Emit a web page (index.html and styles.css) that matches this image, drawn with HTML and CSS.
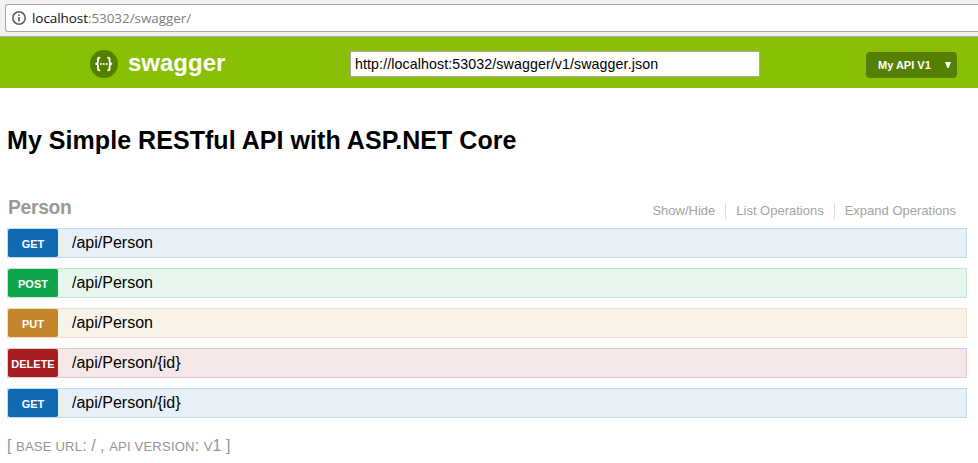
FILE: index.html
```html
<!DOCTYPE html>
<html lang="en">
<head>
<meta charset="utf-8">
<title>Swagger UI</title>
<link rel="stylesheet" href="styles.css">
</head>
<body>
<div class="browser">
  <div class="address">
    <svg class="info" viewBox="0 0 14 14"><circle cx="7" cy="7" r="6.2" fill="none" stroke="#5a5a5a" stroke-width="1.5"/><path d="M7 6v4.4M7 3.4v1.5" stroke="#5a5a5a" stroke-width="1.6"/></svg>
    <span class="url"><span class="host">localhost</span>:53032/swagger/</span>
  </div>
</div>
<header class="header">
  <a class="logo">
    <svg class="mark" viewBox="0 0 28 28"><circle cx="14" cy="14" r="14" fill="#547f00"/><g fill="none" stroke="#fff" stroke-width="1.8"><path d="M10.2 7.6H9.6Q8 7.6 8 9.2V11.8Q8 13.8 5.4 13.9Q8 14 8 16V18.8Q8 20.4 9.6 20.4H10.2"/><path d="M17.4 7.6H18Q19.6 7.6 19.6 9.2V11.8Q19.6 13.8 22.2 13.9Q19.6 14 19.6 16V18.8Q19.6 20.4 18 20.4H17.4"/></g><g fill="#fff"><circle cx="10.9" cy="14" r="1.05"/><circle cx="13.8" cy="14" r="1.05"/><circle cx="16.7" cy="14" r="1.05"/></g></svg>
    <span class="brand">swagger</span>
  </a>
  <div class="source"><span class="source-text">http://localhost:53032/swagger/v1/swagger.json</span></div>
  <div class="version"><span class="version-text">My API V1</span><svg class="arrow" viewBox="0 0 6 6"><path d="M0 0H6L3.6 6H2.4Z" fill="#fff"/></svg></div>
</header>
<main class="content">
  <h1 class="title">My Simple RESTful API with ASP.NET Core</h1>
  <div class="heading">
    <h2 class="resource">Person</h2>
    <ul class="options"><li>Show/Hide</li><li>List Operations</li><li>Expand Operations</li></ul>
  </div>
  <div class="operations">
    <div class="op get"><span class="method">GET</span><span class="path">/api/Person</span></div>
    <div class="op post"><span class="method">POST</span><span class="path">/api/Person</span></div>
    <div class="op put"><span class="method">PUT</span><span class="path">/api/Person</span></div>
    <div class="op delete"><span class="method">DELETE</span><span class="path">/api/Person/{id}</span></div>
    <div class="op get"><span class="method">GET</span><span class="path">/api/Person/{id}</span></div>
  </div>
  <footer class="footer">[ <span class="caps">BASE URL</span>: / , <span class="caps">API VERSION</span>: <span class="caps">V</span>1 ]</footer>
</main>
</body>
</html>
```
FILE: styles.css
```css
* { box-sizing: border-box; }
body { margin: 0; height: 463px; overflow: hidden; background: #fff; color: #000; font-family: "Liberation Sans", Arial, sans-serif; }
.browser { height: 37px; padding: 4px 0 0 5px; background: #f2f2f2; border-bottom: 1px solid #b0b0b0; }
.address { display: flex; align-items: center; height: 28px; padding-left: 6px; background: #fff; border: 1px solid #a9a9a9; border-right: 0; border-radius: 3px 0 0 3px; }
.info { width: 14px; height: 14px; margin-right: 6px; }
.url { font-family: "Open Sans", sans-serif; font-size: 13.5px; letter-spacing: -0.07px; color: #808080; white-space: nowrap; }
.host { color: #111; }
.header { display: flex; align-items: flex-start; height: 51px; padding-left: 90px; background: #89bf04; }
.logo { display: flex; align-items: center; width: 260px; height: 51px; padding-top: 3px; }
.mark { width: 28px; height: 28px; }
.brand { margin: -2px 0 0 10px; color: #fff; font-size: 24px; font-weight: bold; }
.source { display: flex; align-items: center; width: 410px; height: 26px; margin-top: 14px; padding-left: 4px; background: #fff; border: 1px solid #a9a9a9; font-size: 14.2px; letter-spacing: 0.11px; white-space: nowrap; }
.version { display: flex; align-items: center; width: 91px; height: 26px; margin: 15px 0 0 106px; padding-left: 12px; background: #547f00; border-radius: 4px; color: #fff; font-size: 11px; font-weight: bold; }
.arrow { width: 6px; height: 6px; margin: -1px 0 0 14px; }
.content { padding: 0 11px 0 7px; }
.title { margin: 37px 0 0; font-size: 25px; letter-spacing: 0.05px; line-height: 30px; white-space: nowrap; }
.heading { display: flex; justify-content: space-between; height: 73px; padding: 41px 11px 0 1px; }
.resource { margin: 1px 0 0; color: #999; font-size: 19.3px; letter-spacing: -0.3px; line-height: 22px; }
.options { display: flex; height: 16px; margin: 7px 0 0; padding: 0; list-style: none; color: #a4a4a4; font-size: 13px; line-height: 16px; }
.options li + li { margin-left: 10px; padding-left: 10px; border-left: 1px solid #ddd; }
.operations { display: grid; gap: 10px; }
.op { display: flex; height: 30px; border: 1px solid; }
.method { width: 50px; border-radius: 2px; color: #fff; font-size: 11px; font-weight: bold; line-height: 30px; text-align: center; }
.path { padding-left: 14px; font-size: 16px; line-height: 27px; }
.get { background: #e7eff7; border-color: #c3d9ec; }
.get .method { background: #0f6ab4; }
.post { background: #e7f6ec; border-color: #c3e8d1; }
.post .method { background: #10a54a; }
.put { background: #f9f2e9; border-color: #f0e0ca; }
.put .method { background: #c5862b; }
.delete { background: #f5e8e8; border-color: #e8c6c7; }
.delete .method { background: #a41e22; }
.footer { margin-top: 18px; color: #949494; font-size: 16px; letter-spacing: 0.05px; line-height: 20px; white-space: nowrap; }
.caps { font-size: 13.1px; letter-spacing: 0.17px; }
```
